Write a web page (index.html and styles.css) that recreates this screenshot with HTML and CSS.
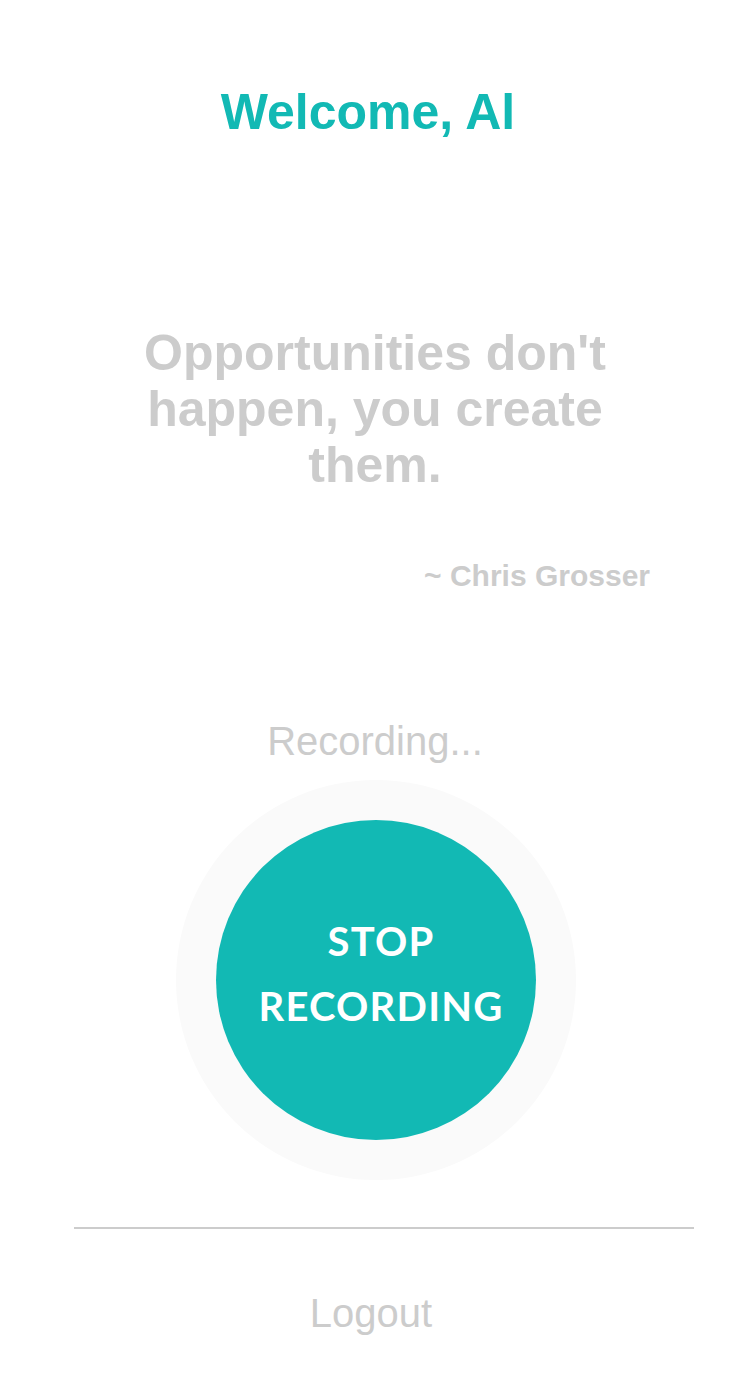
FILE: index.html
```html
<!DOCTYPE html>
<html lang="en">
<head>
<meta charset="utf-8">
<title>Welcome</title>
<link rel="stylesheet" href="styles.css">
</head>
<body>
<main class="screen">
  <header class="header">
    <h1 class="welcome">Welcome, Al</h1>
  </header>
  <section class="quote-block">
    <p class="quote">Opportunities don't happen, you create them.</p>
    <p class="author">~ Chris Grosser</p>
  </section>
  <section class="recorder">
    <p class="status">Recording...</p>
    <div class="ring">
      <button class="rec-button" type="button">
        <span class="rec-line">STOP</span>
        <span class="rec-line">RECORDING</span>
      </button>
    </div>
  </section>
  <hr class="divider">
  <footer class="footer">
    <a class="logout" href="#">Logout</a>
  </footer>
</main>
</body>
</html>
```
FILE: styles.css
```css
html, body {
  margin: 0;
  padding: 0;
  background: #ffffff;
}

body {
  width: 750px;
  font-family: "Liberation Sans", Arial, sans-serif;
}

.screen {
  display: flex;
  flex-direction: column;
}

.header {
  padding-top: 84px;
  padding-right: 14px;
  display: flex;
  justify-content: center;
}

.welcome {
  margin: 0;
  font-size: 50px;
  font-weight: bold;
  line-height: 57px;
  color: #12b9b4;
}

.quote-block {
  display: flex;
  flex-direction: column;
  padding-top: 184px;
}

.quote {
  margin: 0 auto;
  width: 540px;
  text-align: center;
  font-size: 50px;
  font-weight: bold;
  line-height: 56px;
  color: #cccccc;
}

.author {
  margin: 66px 0 0;
  padding-right: 100px;
  text-align: right;
  font-size: 30px;
  font-weight: bold;
  line-height: 34px;
  color: #cccccc;
}

.recorder {
  display: flex;
  flex-direction: column;
  align-items: center;
  padding-top: 125px;
}

.status {
  margin: 0;
  font-size: 40px;
  line-height: 46px;
  color: #cccccc;
}

.ring {
  margin-top: 16px;
  margin-left: 2px;
  width: 400px;
  height: 400px;
  border-radius: 50%;
  background: #fafafa;
  display: flex;
  align-items: center;
  justify-content: center;
}

.rec-button {
  width: 320px;
  height: 320px;
  border: none;
  border-radius: 50%;
  background: #12b9b4;
  color: #ffffff;
  padding: 0 0 12px 10px;
  display: flex;
  flex-direction: column;
  align-items: center;
  justify-content: center;
  font-family: Lato, "Open Sans", sans-serif;
  font-weight: bold;
  font-size: 40px;
  line-height: 65px;
  letter-spacing: 1.2px;
  cursor: pointer;
}

.rec-line {
  display: block;
}

.divider {
  margin: 47px 0 0 74px;
  width: 620px;
  height: 2px;
  border: none;
  background: #cccccc;
}

.footer {
  display: flex;
  justify-content: center;
  padding-top: 61px;
  padding-right: 8px;
}

.logout {
  font-size: 40px;
  line-height: 46px;
  color: #cccccc;
  text-decoration: none;
}
```
